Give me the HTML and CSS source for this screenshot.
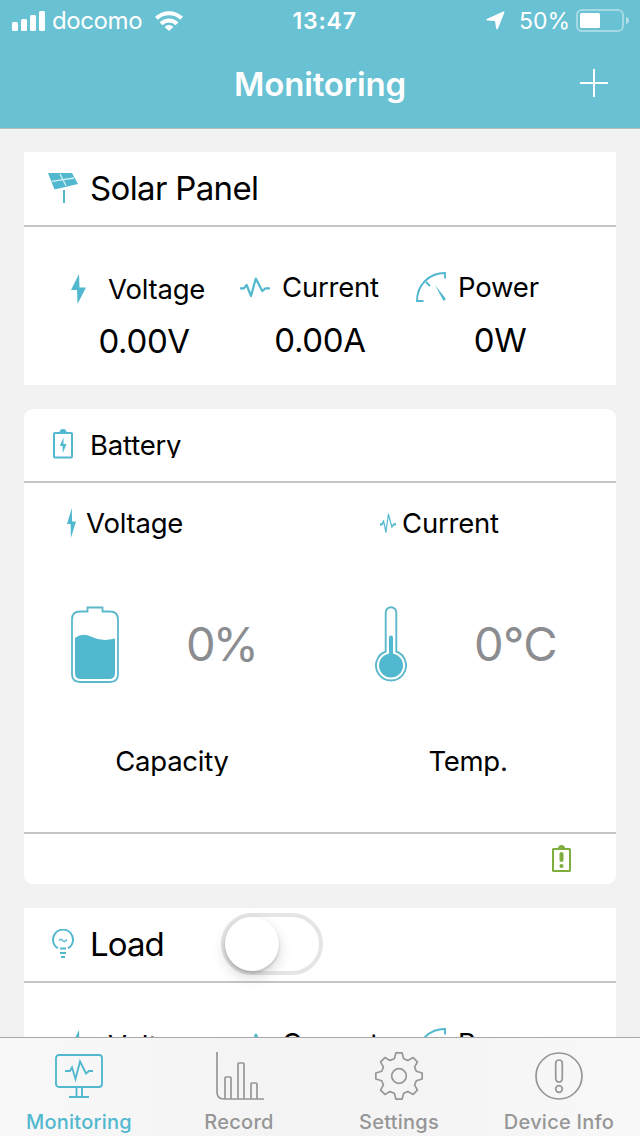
FILE: index.html
```
<!DOCTYPE html>
<html lang="en">
<head>
<meta charset="utf-8">
<title>Monitoring</title>
<link rel="stylesheet" href="styles.css">
</head>
<body>
<svg class="defs" width="0" height="0">
  <symbol id="bolt" viewBox="0 0 15 30" preserveAspectRatio="none"><path d="M8 0 0 16h6L6.500 30 15 13.500H8.500Z" fill="currentColor"/></symbol>
  <symbol id="pulse" viewBox="0 0 30 20" preserveAspectRatio="none"><path d="M0 11.300H4L6.700 8 11 19 15.800 1.500 22.300 14 25.500 11.300H30" fill="none" stroke="currentColor" stroke-width="2.200" stroke-linejoin="round"/></symbol>
  <symbol id="gauge" viewBox="0 0 30 30"><path d="M29 6.500V1C13 1 1 13 1 29H7.500M10 10 14 14" fill="none" stroke="currentColor" stroke-width="1.900"/><path d="M19 13 30 27 27.500 29Z" fill="currentColor"/></symbol>
</svg>
<div class="screen">
  <header class="header">
    <div class="status">
      <div class="status-left">
        <svg width="34" height="20" viewBox="0 0 34 20" fill="#fff"><rect y="11" width="6" height="9" rx="1.500"/><rect x="9" y="8" width="6" height="12" rx="1.500"/><rect x="18" y="4" width="6" height="16" rx="1.500"/><rect x="27" y="0" width="6" height="20" rx="1.500"/></svg>
        <span class="carrier">docomo</span>
        <svg class="wifi" width="28" height="20" viewBox="0 0 28 20" fill="none" stroke="#fff" stroke-width="4"><path d="M1.400 7.300a18.300 18.300 0 0 1 25.200 0M6 12.700a11.500 11.500 0 0 1 16 0"/><path d="M14 20 9.600 15.900a6.200 6.200 0 0 1 8.800 0Z" fill="#fff" stroke="none"/></svg>
      </div>
      <span class="clock">13:47</span>
      <div class="status-right">
        <svg width="19" height="19" viewBox="0 0 19 19"><path d="M17.300.5Q19 0 18.300 1.800L12 17.500Q11 19.500 10.200 17.500L9 10 1.500 9.500Q-.8 8.800 1.200 7.800Z" fill="#fff"/></svg>
        <span class="percent">50%</span>
        <svg width="53" height="23" viewBox="0 0 53 23"><rect x="1" y="1" width="46" height="21" rx="5" fill="none" stroke="#fff" stroke-opacity=".4" stroke-width="2"/><path d="M50 8q3 1 3 3.500T50 15Z" fill="#fff" fill-opacity=".5"/><rect x="4" y="4" width="20" height="15" rx="1.500" fill="#fff"/></svg>
      </div>
    </div>
    <div class="nav">
      <h1 class="title">Monitoring</h1>
      <svg class="add" width="28" height="28" viewBox="0 0 28 28"><path d="M14 0V28M0 14H28" stroke="#fff" stroke-width="2"/></svg>
    </div>
  </header>

  <main class="content">
    <section class="card">
      <div class="card-head">
        <svg class="head-icon" width="30" height="30" viewBox="0 0 30 30"><path d="M0 0H24L30 11 6.500 16.500Z" fill="#52b8cf"/><path d="M4 8.300 26 5M12 1 18 12.700" stroke="#d5f1f6" stroke-width="1.300"/><path d="M16 17V30" stroke="#52b8cf" stroke-width="2"/></svg>
        <h2 class="card-title">Solar Panel</h2>
      </div>
      <div class="metrics">
        <div class="metric metric-v">
          <div class="metric-label"><svg class="i-bolt"><use href="#bolt"/></svg><span class="label">Voltage</span></div>
          <div class="value">0.00V</div>
        </div>
        <div class="metric metric-c">
          <div class="metric-label"><svg class="i-pulse"><use href="#pulse"/></svg><span class="label">Current</span></div>
          <div class="value v-up">0.00A</div>
        </div>
        <div class="metric metric-p">
          <div class="metric-label"><svg class="i-gauge"><use href="#gauge"/></svg><span class="label">Power</span></div>
          <div class="value v-up v-power">0W</div>
        </div>
      </div>
    </section>

    <section class="card battery">
      <div class="card-head battery-head">
        <svg class="head-icon" width="30" height="30" viewBox="0 0 30 30"><path d="M11.500 3.500q0-3.500 3.500-3.500t3.500 3.500Z" fill="#52b8cf"/><rect x="6" y="4" width="18" height="24.500" rx="1" fill="none" stroke="#52b8cf" stroke-width="2"/><path d="M15.500 8.500 11.800 17H14.500L14.800 24 18.500 15H15.500Z" fill="#52b8cf"/></svg>
        <h2 class="label battery-title">Battery</h2>
      </div>
      <div class="battery-body">
        <div class="battery-col">
          <div class="battery-label"><svg class="i-bolt-sm"><use href="#bolt"/></svg><span class="label">Voltage</span></div>
          <div class="reading">
            <svg width="48" height="77" viewBox="0 0 48 77"><path d="M16.500 5.500V1.500H31.500V5.500H39Q47 5.500 47 13.500V68Q47 76 39 76H9Q1 76 1 68V13.500Q1 5.500 9 5.500Z" fill="none" stroke="#5cb8cb" stroke-width="1.800"/><path d="M4 32Q11 26 21 31T44 32.500V67Q44 73 38 73H10Q4 73 4 67Z" fill="#52b8cf"/></svg>
            <span class="big big-percent">0%</span>
          </div>
          <div class="caption">Capacity</div>
        </div>
        <div class="battery-col col-right">
          <div class="battery-label"><svg class="i-pulse-sm"><use href="#pulse"/></svg><span class="label">Current</span></div>
          <div class="reading">
            <svg width="32" height="76" viewBox="0 0 32 76"><path d="M10.700 45.500V6.500a5.300 5.300 0 0 1 10.600 0V45.500A15 15 0 1 1 10.700 45.500Z" fill="none" stroke="#5cb8cb" stroke-width="1.900"/><path d="M16 31.500V50" stroke="#52b8cf" stroke-width="4" stroke-linecap="round"/><circle cx="16" cy="59.500" r="12" fill="#52b8cf"/></svg>
            <span class="big">0°C</span>
          </div>
          <div class="caption">Temp.</div>
        </div>
      </div>
      <div class="battery-foot">
        <svg width="19" height="27" viewBox="0 0 19 27"><path d="M6 3.500q0-3.500 3.500-3.500T13 3.500Z" fill="#7fad3e"/><rect x="1" y="4" width="17" height="22" rx=".5" fill="none" stroke="#7fad3e" stroke-width="2"/><path d="M9.500 9V15" stroke="#7fad3e" stroke-width="4" stroke-linecap="round"/><circle cx="9.500" cy="21" r="2.100" fill="#7fad3e"/></svg>
      </div>
    </section>

    <section class="card">
      <div class="card-head">
        <svg class="head-icon" width="30" height="30" viewBox="0 0 30 30" fill="none" stroke="#52b8cf" stroke-width="1.900"><path d="M10 19.300a10 10 0 1 1 10 0"/><path d="M11 11.500q2-2.500 3.500 0t4.500-1" stroke-width="1.400"/><path d="M12 19.500H18M12 24H18M13 28H17"/></svg>
        <h2 class="card-title t-load">Load</h2>
        <div class="switch"><div class="knob"></div></div>
      </div>
      <div class="metrics">
        <div class="metric metric-v">
          <div class="metric-label"><svg class="i-bolt"><use href="#bolt"/></svg><span class="label">Voltage</span></div>
        </div>
        <div class="metric metric-c">
          <div class="metric-label"><svg class="i-pulse"><use href="#pulse"/></svg><span class="label">Current</span></div>
        </div>
        <div class="metric metric-p">
          <div class="metric-label"><svg class="i-gauge"><use href="#gauge"/></svg><span class="label">Power</span></div>
        </div>
      </div>
    </section>
  </main>

  <nav class="tabs">
    <div class="tab active">
      <svg width="48" height="48" viewBox="0 0 48 48" fill="none" stroke="currentColor" stroke-width="1.900"><rect x="1" y="3" width="46" height="32" rx="3"/><path d="M21.500 35V45M27 35V45M14 45H34M10 19H15L17 15.500 20.500 27 25 9.500 31 21.500 34 19H38"/></svg>
      <span class="tab-label">Monitoring</span>
    </div>
    <div class="tab">
      <svg class="i-chart" width="48" height="48" viewBox="0 0 48 48" fill="none" stroke="currentColor" stroke-width="1.700"><path d="M1 0V40Q1 47 8 47H48M9 47V26q0-1 1-1h4q1 0 1 1V47M22 47V12q0-1 1-1h4q1 0 1 1V47M35 47V32q0-1 1-1h4q1 0 1 1V47"/></svg>
      <span class="tab-label">Record</span>
    </div>
    <div class="tab">
      <svg width="48" height="48" viewBox="-24 -24 48 48" fill="none" stroke="currentColor" stroke-width="1.700" stroke-linejoin="round"><path d="M-3-23.200H3L4.700-17.300 8.900-15.600 14.100-18.400 18.400-14.100 15.600-8.900 17.300-4.700 23.200-3V3L17.300 4.700 15.600 8.900 18.400 14.100 14.100 18.400 8.900 15.600 4.700 17.300 3 23.200H-3L-4.700 17.300-8.900 15.600-14.100 18.400-18.400 14.100-15.600 8.900-17.300 4.700-23.200 3V-3L-17.300-4.700-15.600-8.900-18.400-14.100-14.100-18.400-8.900-15.600-4.700-17.300Z"/><circle r="7.300"/></svg>
      <span class="tab-label">Settings</span>
    </div>
    <div class="tab">
      <svg width="48" height="48" viewBox="0 0 48 48" fill="none" stroke="currentColor" stroke-width="1.700"><circle cx="24" cy="24" r="23"/><rect x="20.700" y="8" width="6.600" height="22" rx="3.300"/><circle cx="24" cy="37" r="3.300"/></svg>
      <span class="tab-label">Device Info</span>
    </div>
  </nav>
</div>
</body>
</html>
```
FILE: styles.css
```
* { box-sizing: border-box; }
body { margin: 0; font-family: Inter, "Liberation Sans", sans-serif; color: #000; }
svg { display: block; flex: none; }
.defs { position: absolute; }
h1, h2 { margin: 0; font-weight: 400; }
span, h1, h2, .value, .caption { white-space: nowrap; }

.screen { width: 640px; height: 1136px; display: flex; flex-direction: column; overflow: hidden; background: #f2f2f2; }

.header { height: 129px; flex: none; background: #69c1d4; color: #fff; border-bottom: 1px solid #b3bfc2; }
.status { height: 40px; display: grid; grid-template-columns: 1fr 72px 1fr; align-items: center; padding: 0 11px 0 12px; font-size: 24px; line-height: 40px; }
.status-left { display: flex; align-items: center; }
.carrier { margin-left: 6px; letter-spacing: -.4px; }
.wifi { margin-left: 13px; }
.clock { font-weight: 600; font-size: 23px; letter-spacing: .8px; padding: 1px 0 0 8px; }
.status-right { display: flex; align-items: center; justify-content: flex-end; }
.percent { margin: 0 6px 0 14px; font-size: 23px; }
.nav { height: 88px; display: grid; grid-template-columns: 1fr auto 1fr; align-items: center; padding: 0 32px; }
.title { grid-column: 2; font-size: 33px; font-weight: 600; line-height: 40px; letter-spacing: -.15px; }
.add { justify-self: end; margin-top: -2px; }

.content { flex: 1; min-height: 0; overflow: hidden; padding: 23px 24px 0; display: flex; flex-direction: column; gap: 24px; }
.card { flex: none; height: 233px; background: #fff; }
.card-head { height: 75px; display: flex; align-items: center; padding-left: 24px; border-bottom: 2px solid #c5c5c7; }
.head-icon { margin: -2px 12px 0 0; }
.card-title { font-size: 33px; line-height: 40px; letter-spacing: -.65px; margin-top: -2px; }
.t-load { letter-spacing: -.9px; }

.metrics { display: grid; grid-template-columns: repeat(3, 176px); padding: 44px 32px 0; }
.metric-label { height: 34px; display: flex; align-items: center; }
.label { font-size: 27.500px; line-height: 34px; letter-spacing: -.2px; }
.metric svg, .battery-label svg { color: #52b8cf; }
.metric .label { margin-top: -2px; }
.metric-v .label { margin-top: 1px; }
.i-bolt { width: 15px; height: 30px; margin: 2px 22px 0 15px; }
.i-pulse { width: 30px; height: 20px; margin: -2px 12px 0 8px; }
.i-gauge { width: 30px; height: 30px; margin: -3px 12px 0 8px; }
.value { font-size: 33px; line-height: 40px; margin-top: 16px; text-align: center; letter-spacing: -.3px; }
.v-up { margin-top: 15px; }
.v-power { padding-left: 8px; }

.battery { height: 475px; border-radius: 9px; }
.battery-head { height: 74px; }
.battery-title { line-height: 25px; height: 25px; overflow: hidden; }
.battery-body { height: 349px; display: grid; grid-template-columns: 296px 296px; }
.battery-label { height: 80px; display: flex; align-items: center; padding-left: 43px; }
.i-bolt-sm { width: 9px; height: 30px; margin-right: 10px; }
.i-pulse-sm { width: 16px; height: 20px; margin-right: 6px; }
.col-right .battery-label { padding-left: 60px; }
.reading { height: 76px; margin-top: 43px; display: flex; align-items: center; padding-left: 47px; }
.col-right .reading { padding-left: 55px; }
.big { font-size: 47px; line-height: 60px; margin-left: 67px; color: #8c8d91; letter-spacing: -.7px; }
.big-percent { letter-spacing: -3px; }
.caption { font-size: 27.500px; line-height: 29px; height: 29px; overflow: hidden; margin-top: 65px; text-align: center; letter-spacing: -.25px; }
.battery-foot { height: 52px; border-top: 2px solid #c5c5c7; display: flex; align-items: center; justify-content: flex-end; padding: 0 45px 2px 0; }

.switch { margin: -2px 0 0 57px; width: 102px; height: 62px; border-radius: 31px; border: 4px solid #e5e5e5; }
.knob { width: 54px; height: 54px; border-radius: 50%; background: #fff; box-shadow: 0 6px 14px rgba(0,0,0,.16), 0 2px 3px rgba(0,0,0,.16); }

.tabs { height: 99px; flex: none; border-top: 1px solid #a8a8a9; background: linear-gradient(90deg, #f8f8f8, #f3f3f4 50%, #f8f8f8); display: grid; grid-template-columns: repeat(4, 160px); }
.tab { display: flex; flex-direction: column; align-items: center; padding: 14px 2px 0 0; color: #969696; }
.i-chart { margin-left: 2px; }
.active { color: #52b8cf; }
.tab-label { margin-top: 10px; font-size: 20px; line-height: 24px; font-weight: 500; letter-spacing: .25px; }
```
